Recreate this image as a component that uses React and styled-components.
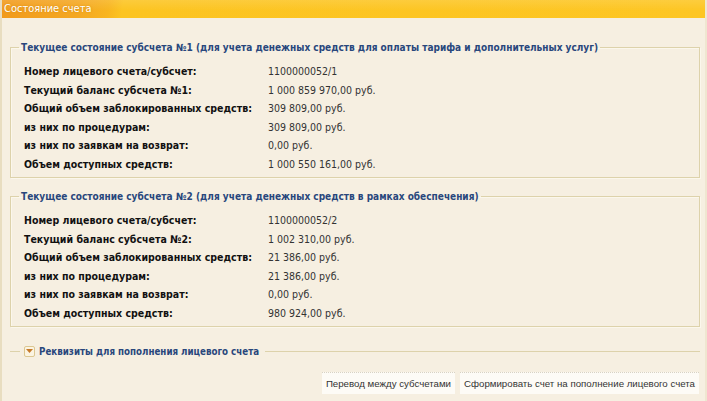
import React from "react";
import styled, { createGlobalStyle } from "styled-components";

const GlobalStyle = createGlobalStyle`
  html, body {
    margin: 0;
    padding: 0;
    background: #f6efe1;
  }
  body {
    font-family: Tahoma, "DejaVu Sans Condensed", "Liberation Sans", sans-serif;
    font-size: 11px;
  }
`;

const Frame = styled.div`
  width: 707px;
  height: 401px;
  box-sizing: border-box;
  background: #f6efe1;
  border-left: 2px solid #e8ddc0;
  border-right: 2px solid #efe6d0;
  overflow: hidden;
`;

const Header = styled.div`
  height: 18px;
  line-height: 18px;
  padding-left: 4px;
  margin-left: -2px;
  margin-right: -2px;
  color: #fff;
  font-size: 11px;
  text-shadow: 0 0 2px #d08a10;
  background:
    linear-gradient(180deg, rgba(255, 255, 255, 0.12) 0, rgba(255, 255, 255, 0) 60%),
    linear-gradient(100deg, #f19a1c 0, #f4a822 80px, #f8b51f 108px, #fcc421 122px, #fdc623 100%);
`;

const Body = styled.div`
  padding: 24px 5px 0 8px;
  display: flex;
  flex-direction: column;
`;

const Fieldset = styled.fieldset`
  margin: 0 0 13px 0;
  padding: 9px 0 4px 0;
  border: 1px solid #ddd2ab;
  box-shadow: inset 1px 1px 0 #fbf7ec, 1px 1px 0 #fbf7ec;
`;

const Legend = styled.legend`
  padding: 0 2px;
  margin-left: 8px;
  color: #29477c;
  font-weight: bold;
  font-size: 10px;
  white-space: nowrap;
`;

const Rows = styled.div`
  display: grid;
  grid-template-columns: 244px 1fr;
  grid-auto-rows: 18.5px;
  align-items: center;
  padding-left: 13px;
  white-space: nowrap;
`;

const Label = styled.div`
  font-weight: bold;
  color: #111;
  font-size: 10.5px;
`;

const Value = styled.div`
  color: #333;
  font-size: 10.5px;
`;

const Collapser = styled.div`
  display: flex;
  align-items: center;
  gap: 4px;
  margin-top: 4px;
  height: 14px;
`;

const Line = styled.div`
  height: 1px;
  background: #ddd2ab;
  width: ${(p) => p.$w || "auto"};
  flex: ${(p) => (p.$grow ? 1 : "none")};
`;

const ToggleBtn = styled.span`
  width: 11px;
  height: 11px;
  box-sizing: border-box;
  border: 1px solid #dcc791;
  border-radius: 2px;
  background: #fbf4e2;
  display: flex;
  align-items: center;
  justify-content: center;
`;

const CollapseTitle = styled.span`
  color: #29477c;
  font-weight: bold;
  font-size: 9.7px;
  margin-right: 2px;
  white-space: nowrap;
`;

const Buttons = styled.div`
  display: flex;
  justify-content: flex-end;
  gap: 5px;
  margin-top: 14px;
  padding-right: 1px;
`;

const Button = styled.button`
  height: 22px;
  padding: 0 4px;
  font-family: "Liberation Sans", Arial, sans-serif;
  font-size: 9.7px;
  color: #333;
  background: #fdfbf6;
  border: none;
  border-top: 1px dotted #d8d2c4;
  white-space: nowrap;
  cursor: pointer;
`;

const accounts = [
  {
    title:
      "Текущее состояние субсчета №1 (для учета денежных средств для оплаты тарифа и дополнительных услуг)",
    rows: [
      ["Номер лицевого счета/субсчет:", "1100000052/1"],
      ["Текущий баланс субсчета №1:", "1 000 859 970,00 руб."],
      ["Общий объем заблокированных средств:", "309 809,00 руб."],
      ["из них по процедурам:", "309 809,00 руб."],
      ["из них по заявкам на возврат:", "0,00 руб."],
      ["Объем доступных средств:", "1 000 550 161,00 руб."],
    ],
  },
  {
    title:
      "Текущее состояние субсчета №2 (для учета денежных средств в рамках обеспечения)",
    rows: [
      ["Номер лицевого счета/субсчет:", "1100000052/2"],
      ["Текущий баланс субсчета №2:", "1 002 310,00 руб."],
      ["Общий объем заблокированных средств:", "21 386,00 руб."],
      ["из них по процедурам:", "21 386,00 руб."],
      ["из них по заявкам на возврат:", "0,00 руб."],
      ["Объем доступных средств:", "980 924,00 руб."],
    ],
  },
];

const App = () => (
  <>
    <GlobalStyle />
    <Frame>
      <Header>Состояние счета</Header>
      <Body>
        {accounts.map((acc) => (
          <Fieldset key={acc.title}>
            <Legend>{acc.title}</Legend>
            <Rows>
              {acc.rows.map(([l, v]) => (
                <React.Fragment key={l}>
                  <Label>{l}</Label>
                  <Value>{v}</Value>
                </React.Fragment>
              ))}
            </Rows>
          </Fieldset>
        ))}

        <Collapser>
          <Line $w="10px" />
          <ToggleBtn>
            <svg width="7" height="4" viewBox="0 0 7 4">
              <path d="M0 0 L7 0 L3.5 4 Z" fill="#c77a2a" />
            </svg>
          </ToggleBtn>
          <CollapseTitle>Реквизиты для пополнения лицевого счета</CollapseTitle>
          <Line $grow />
        </Collapser>

        <Buttons>
          <Button>Перевод между субсчетами</Button>
          <Button>Сформировать счет на пополнение лицевого счета</Button>
        </Buttons>
      </Body>
    </Frame>
  </>
);

export default App;
